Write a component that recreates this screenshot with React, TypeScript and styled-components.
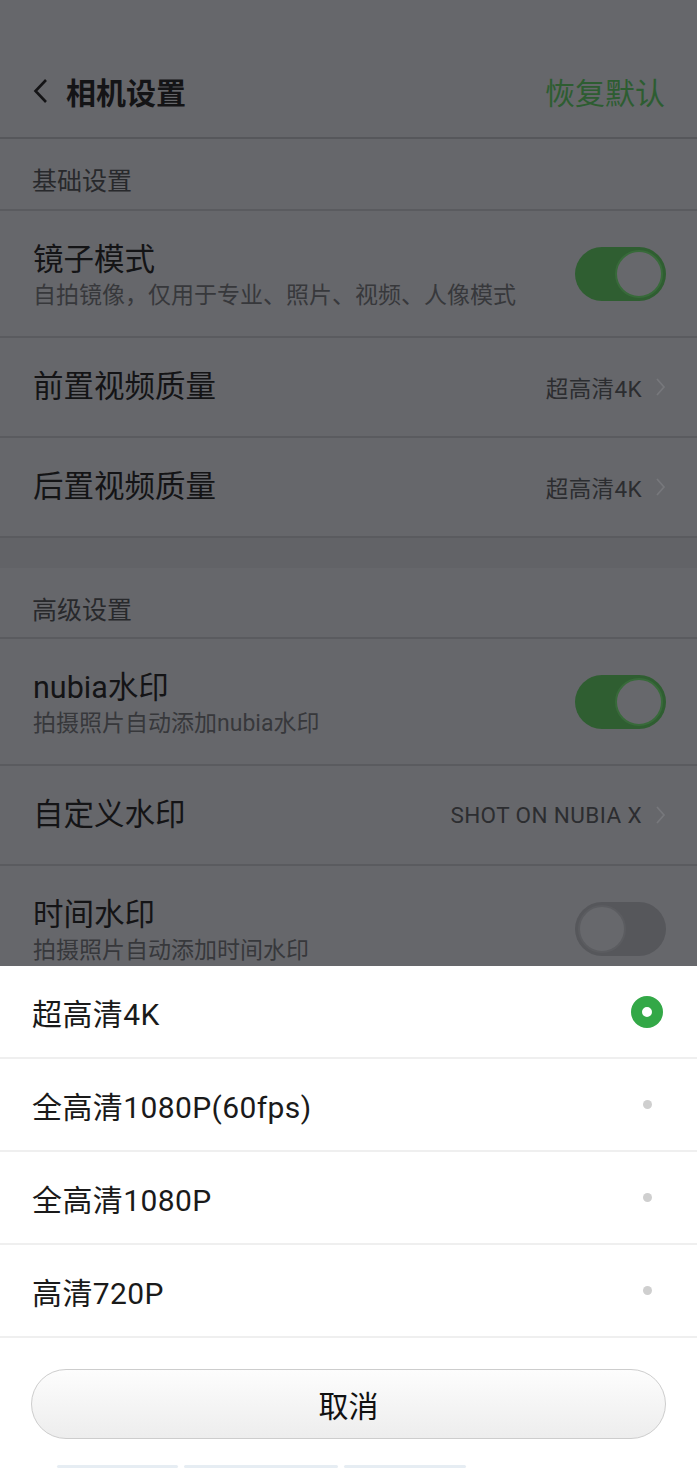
import React from 'react';
import styled, { createGlobalStyle } from 'styled-components';

const GlobalStyle = createGlobalStyle`
	html, body {
		margin: 0;
		padding: 0;
		background: #66676b;
	}
	* { box-sizing: border-box; }
`;

const font = `Roboto, "Noto Sans CJK SC", "Noto Sans", sans-serif`;

const Page = styled.div`
	width: 697px;
	height: 1471px;
	overflow: hidden;
	display: flex;
	flex-direction: column;
	font-family: ${font};
	background: #66676b;
`;

const Dimmed = styled.div`
	display: flex;
	flex-direction: column;
	height: 966px;
	overflow: hidden;
	flex-shrink: 0;

	> * { flex-shrink: 0; }
`;

const StatusSpace = styled.div`
	height: 60px;
`;

const Header = styled.div`
	height: 79px;
	display: flex;
	align-items: center;
	padding: 0 32px 15px 33px;
	border-bottom: 2px solid #56575b;
`;

const BackTitle = styled.div`
	display: flex;
	align-items: center;
	gap: 18px;
	font-size: 30px;
	font-weight: 700;
	color: #141416;
`;

const ResetLink = styled.div`
	margin-left: auto;
	font-size: 30px;
	color: #2d5d31;
`;

const SectionLabel = styled.div<{ $h: number }>`
	height: ${p => p.$h}px;
	display: flex;
	align-items: center;
	padding: 10px 33px 0 32px;
	font-size: 25px;
	color: #28292c;
	border-bottom: 2px solid #5a5b5f;
`;

const Gap = styled.div`
	height: 30px;
	background: #626367;
`;

const Row = styled.div<{ $h: number }>`
	height: ${p => p.$h}px;
	display: flex;
	align-items: center;
	padding: 0 31px 0 33px;
	border-bottom: 2px solid #5a5b5f;
`;

const TextCol = styled.div`
	display: flex;
	flex-direction: column;
	gap: 3px;
	padding-top: 6px;
`;

const Title = styled.div`
	font-size: 30.5px;
	line-height: 36px;
	color: #141416;
`;

const Sub = styled.div`
	font-size: 23px;
	line-height: 30px;
	color: #37383b;
`;

const Value = styled.div`
	margin-left: auto;
	display: flex;
	align-items: center;
	gap: 13px;
	font-size: 22.5px;
	letter-spacing: 0.4px;
	color: #2c2d30;
`;

const Track = styled.div<{ $on: boolean }>`
	margin-left: auto;
	width: 91px;
	height: 54px;
	border-radius: 27px;
	padding: 3px;
	display: flex;
	justify-content: ${p => (p.$on ? 'flex-end' : 'flex-start')};
	background: ${p => (p.$on ? '#2f5e31' : '#56575b')};
`;

const Knob = styled.div<{ $on: boolean }>`
	width: 48px;
	height: 48px;
	border-radius: 50%;
	background: #67686c;
	border: 2px solid ${p => (p.$on ? '#386a3a' : '#5b5c60')};
`;

const Sheet = styled.div`
	flex: 1;
	background: #ffffff;
	display: flex;
	flex-direction: column;
`;

const Option = styled.div`
	height: 93px;
	display: flex;
	align-items: center;
	padding: 0 34px 0 32px;
	border-bottom: 2px solid #efefef;
	font-size: 30px;
	letter-spacing: 0.4px;
	color: #1a1a1a;
`;

const RadioOn = styled.div`
	margin-left: auto;
	width: 32px;
	height: 32px;
	border-radius: 50%;
	border: 11px solid #33a847;
	background: #fff;
`;

const RadioOff = styled.div`
	margin-left: auto;
	margin-right: 11px;
	width: 9px;
	height: 9px;
	border-radius: 50%;
	background: #cfcfcf;
`;

const Footer = styled.div`
	padding: 31px 31px 0;
	display: flex;
	flex-direction: column;
`;

const CancelButton = styled.div`
	width: 100%;
	height: 70px;
	border-radius: 35px;
	border: 1.5px solid #cdcdcd;
	background: linear-gradient(#fdfdfd, #ededed);
	display: flex;
	align-items: center;
	justify-content: center;
	font-size: 30px;
	color: #111;
`;

const NavHints = styled.div`
	margin-top: 26px;
	padding-left: 26px;
	display: flex;
	gap: 6px;
`;

const NavBar = styled.div<{ $w: number }>`
	width: ${p => p.$w}px;
	height: 3px;
	background: #e6edf3;
	border-radius: 2px;
`;

const Chevron = ({ color = '#77787c' }: { color?: string }) => (
	<svg width="11" height="20" viewBox="0 0 11 20">
		<polyline points="2,2 9,10 2,18" fill="none" stroke={color} strokeWidth="1.7" />
	</svg>
);

const BackArrow = () => (
	<svg width="15" height="26" viewBox="0 0 15 26">
		<polyline points="13,2 2.5,13 13,24" fill="none" stroke="#141416" strokeWidth="2.6" />
	</svg>
);

const Toggle = ({ on }: { on: boolean }) => (
	<Track $on={on}>
		<Knob $on={on} />
	</Track>
);

const options = ['超高清4K', '全高清1080P(60fps)', '全高清1080P', '高清720P'];

export default function App() {
	return (
		<Page>
			<GlobalStyle />
			<Dimmed>
				<StatusSpace />
				<Header>
					<BackTitle>
						<BackArrow />
						相机设置
					</BackTitle>
					<ResetLink>恢复默认</ResetLink>
				</Header>
				<SectionLabel $h={72}>基础设置</SectionLabel>
				<Row $h={127}>
					<TextCol>
						<Title>镜子模式</Title>
						<Sub>自拍镜像，仅用于专业、照片、视频、人像模式</Sub>
					</TextCol>
					<Toggle on />
				</Row>
				<Row $h={100}>
					<Title>前置视频质量</Title>
					<Value>超高清4K <Chevron /></Value>
				</Row>
				<Row $h={100}>
					<Title>后置视频质量</Title>
					<Value>超高清4K <Chevron /></Value>
				</Row>
				<Gap />
				<SectionLabel $h={71}>高级设置</SectionLabel>
				<Row $h={127}>
					<TextCol>
						<Title>nubia水印</Title>
						<Sub>拍摄照片自动添加nubia水印</Sub>
					</TextCol>
					<Toggle on />
				</Row>
				<Row $h={100}>
					<Title>自定义水印</Title>
					<Value>SHOT ON NUBIA X <Chevron /></Value>
				</Row>
				<Row $h={127}>
					<TextCol>
						<Title>时间水印</Title>
						<Sub>拍摄照片自动添加时间水印</Sub>
					</TextCol>
					<Toggle on={false} />
				</Row>
			</Dimmed>
			<Sheet>
				{options.map((o, i) => (
					<Option key={o}>
						{o}
						{i === 0 ? <RadioOn /> : <RadioOff />}
					</Option>
				))}
				<Footer>
					<CancelButton>取消</CancelButton>
					<NavHints>
						<NavBar $w={121} />
						<NavBar $w={154} />
						<NavBar $w={122} />
					</NavHints>
				</Footer>
			</Sheet>
		</Page>
	);
}
